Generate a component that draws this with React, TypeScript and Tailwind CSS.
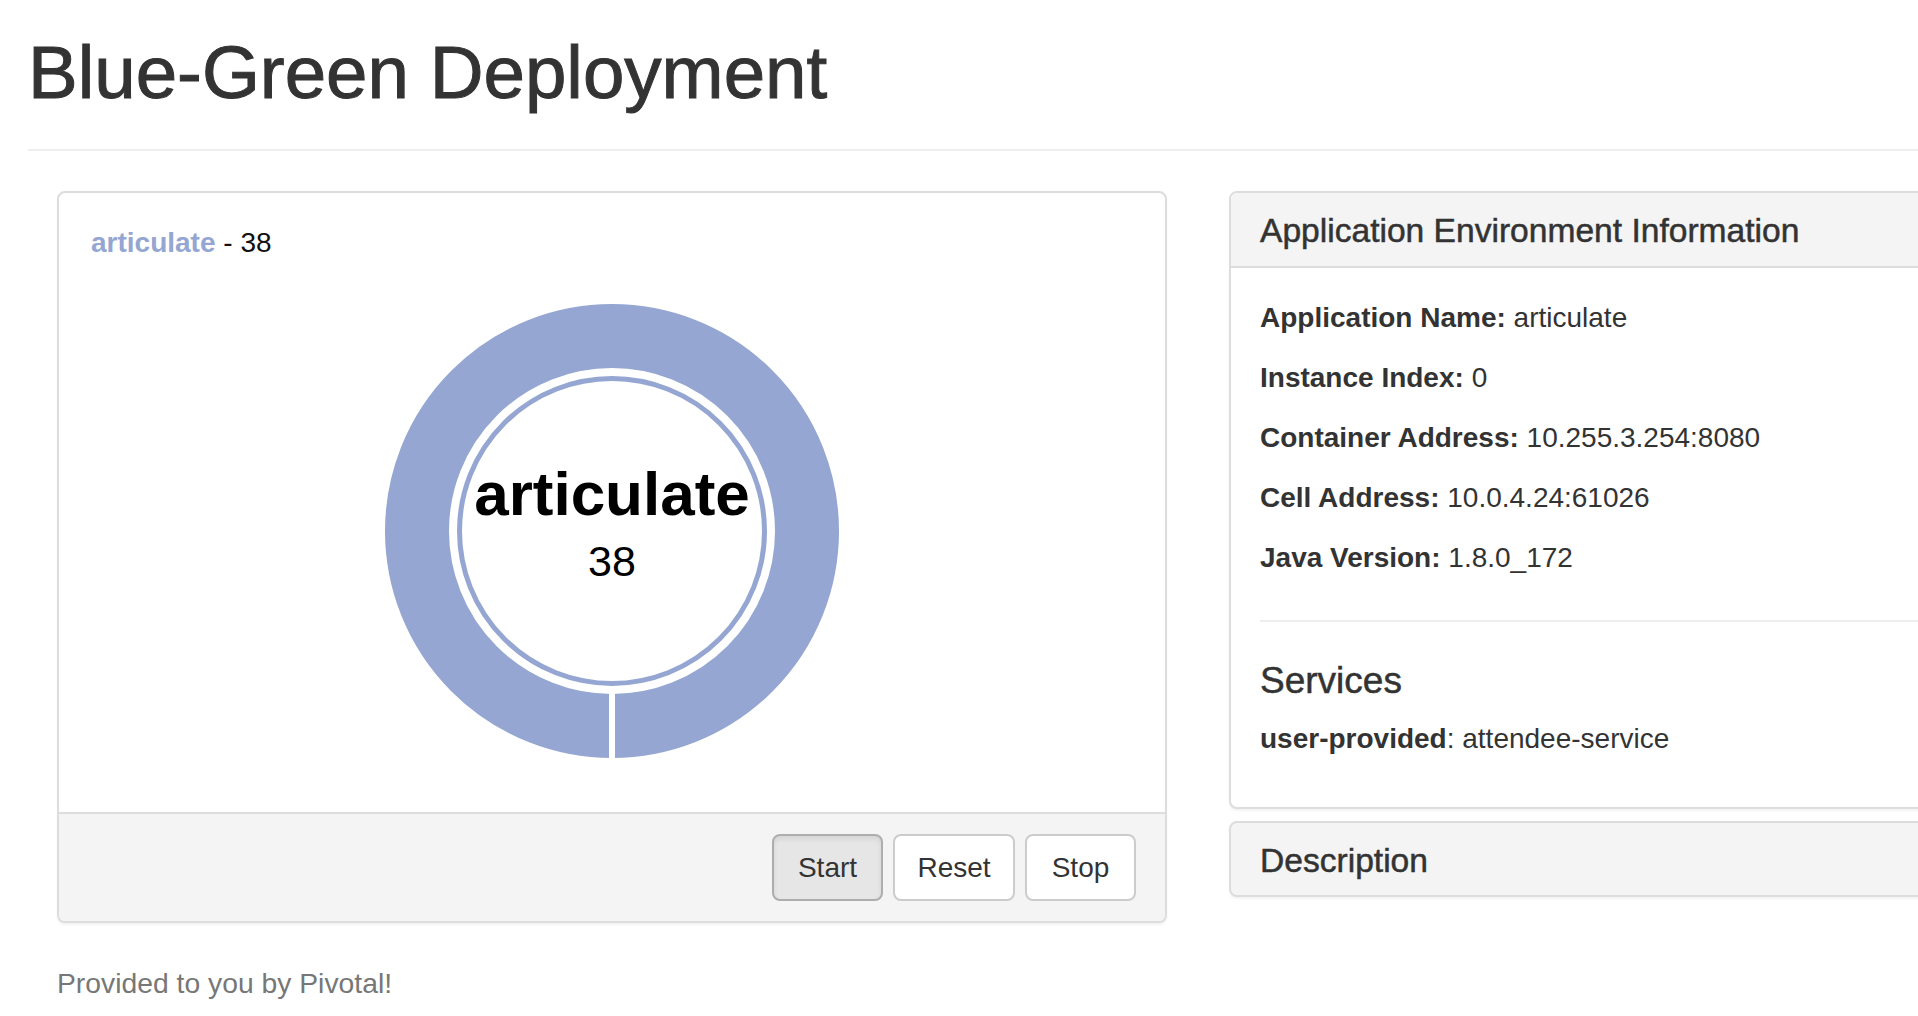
import React from "react";

function Donut() {
  return (
    <svg width="456" height="456" viewBox="0 0 456 456" className="block mx-auto">
      <circle cx="228" cy="228" r="195" fill="none" stroke="#94a6d1" strokeWidth="64" />
      <circle cx="228" cy="228" r="152.5" fill="#ffffff" stroke="#94a6d1" strokeWidth="5" />
      <rect x="225" y="386" width="6" height="70" fill="#ffffff" />
      <text
        x="228"
        y="212"
        textAnchor="middle"
        fontFamily="'Liberation Sans', Arial, sans-serif"
        fontWeight="700"
        fontSize="62"
        fill="#000000"
      >
        articulate
      </text>
      <text
        x="228"
        y="273"
        textAnchor="middle"
        fontFamily="'Liberation Sans', Arial, sans-serif"
        fontSize="43"
        fill="#000000"
      >
        38
      </text>
    </svg>
  );
}

function Row({ label, value }: { label: string; value: string }) {
  return (
    <div className="h-[40px] text-[28px] leading-[40px] text-[#333333] whitespace-nowrap">
      <span className="font-bold">{label}</span> {value}
    </div>
  );
}

export default function App() {
  return (
    <div className="w-[1918px] h-[1016px] overflow-hidden bg-white font-['Liberation_Sans',Arial,sans-serif] text-[#333333]">
      <div className="w-[2400px] pl-[28px]">
        <div className="border-b-2 border-[#eeeeee] pb-[36px]">
          <h1 className="mt-[33px] text-[74.5px] leading-[80px] font-normal text-[#333333] [-webkit-text-stroke:1px_#333333] whitespace-nowrap">
            Blue-Green Deployment
          </h1>
        </div>

        <div className="mt-[40px] flex gap-[62px] px-[29px] items-start">
          {/* Left column */}
          <div className="w-[1110px] shrink-0">
            <div className="rounded-[8px] border-2 border-[#dddddd] bg-white shadow-[0_2px_2px_rgba(0,0,0,0.05)] overflow-hidden">
              <div className="pt-[31px] pb-[53px] px-[25px]">
                <div className="ml-[7px] h-[37px] text-[28px] leading-[37px] whitespace-nowrap">
                  <span className="font-bold text-[#94a6d1]">articulate</span>
                  <span className="text-[#111111]"> - 38</span>
                </div>
                <div className="mt-[42px]">
                  <Donut />
                </div>
              </div>
              <div className="border-t-2 border-[#dddddd] bg-[#f4f4f4] pt-[20px] pb-[20px] pr-[29px] flex justify-end gap-[10px]">
                <button className="w-[111px] h-[67px] rounded-[8px] border-2 border-[#adadad] bg-[#e6e6e6] text-[28px] text-[#333333] shadow-[inset_0_3px_5px_rgba(0,0,0,0.08)]">
                  Start
                </button>
                <button className="w-[122px] h-[67px] rounded-[8px] border-2 border-[#cccccc] bg-white text-[28px] text-[#333333]">
                  Reset
                </button>
                <button className="w-[111px] h-[67px] rounded-[8px] border-2 border-[#cccccc] bg-white text-[28px] text-[#333333]">
                  Stop
                </button>
              </div>
            </div>
            <p className="mt-[40px] text-[28.3px] leading-[40px] text-[#777777] whitespace-nowrap">
              Provided to you by Pivotal!
            </p>
          </div>

          {/* Right column */}
          <div className="w-[1110px] shrink-0">
            <div className="rounded-[8px] border-2 border-[#dddddd] bg-white shadow-[0_2px_2px_rgba(0,0,0,0.05)] overflow-hidden">
              <div className="bg-[#f4f4f4] border-b-2 border-[#dddddd] pt-[20px] pb-[17px] px-[29px]">
                <h3 className="text-[33.6px] leading-[36px] font-normal [-webkit-text-stroke:0.5px_#333333] whitespace-nowrap">
                  Application Environment Information
                </h3>
              </div>
              <div className="pt-[30px] pb-[48px] pl-[29px]">
                <div className="flex flex-col gap-[20px]">
                  <Row label="Application Name:" value="articulate" />
                  <Row label="Instance Index:" value="0" />
                  <Row label="Container Address:" value="10.255.3.254:8080" />
                  <Row label="Cell Address:" value="10.0.4.24:61026" />
                  <Row label="Java Version:" value="1.8.0_172" />
                </div>
                <div className="mt-[42px] h-[2px] bg-[#eeeeee]" />
                <h3 className="mt-[38px] text-[37px] leading-[41px] font-normal [-webkit-text-stroke:0.5px_#333333] whitespace-nowrap">
                  Services
                </h3>
                <div className="mt-[18px] h-[40px] text-[28px] leading-[40px] whitespace-nowrap">
                  <span className="font-bold">user-provided</span>: attendee-service
                </div>
              </div>
            </div>
            <div className="mt-[12px] rounded-[8px] border-2 border-[#dddddd] bg-[#f4f4f4] shadow-[0_2px_2px_rgba(0,0,0,0.05)] pt-[20px] pb-[16px] px-[29px]">
              <h3 className="text-[33.6px] leading-[36px] font-normal [-webkit-text-stroke:0.5px_#333333] whitespace-nowrap">
                Description
              </h3>
            </div>
          </div>
        </div>
      </div>
    </div>
  );
}
